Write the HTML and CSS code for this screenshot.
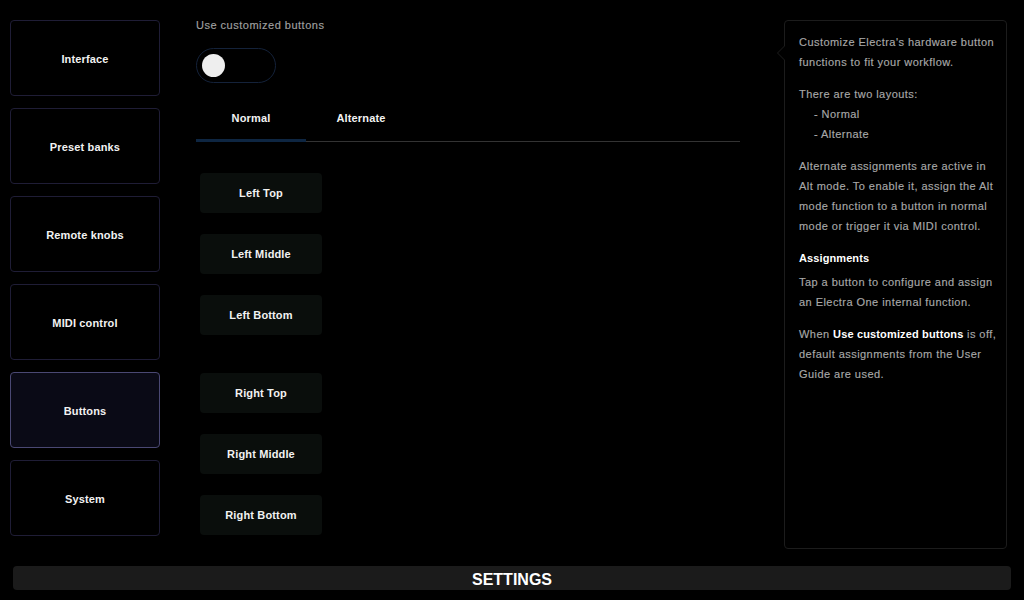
FILE: index.html
```html
<!DOCTYPE html>
<html>
<head>
<meta charset="utf-8">
<link rel="stylesheet" href="styles.css">
</head>
<body>
<div class="app">
  <div class="main">
    <nav class="sidebar">
      <div class="nav-item">Interface</div>
      <div class="nav-item">Preset banks</div>
      <div class="nav-item">Remote knobs</div>
      <div class="nav-item">MIDI control</div>
      <div class="nav-item active">Buttons</div>
      <div class="nav-item">System</div>
    </nav>
    <section class="content">
      <div class="label">Use customized buttons</div>
      <div class="toggle"><div class="knob"></div></div>
      <div class="tabs">
        <div class="tab active">Normal</div>
        <div class="tab">Alternate</div>
      </div>
      <div class="buttons">
        <div class="group">
          <div class="hw-btn">Left Top</div>
          <div class="hw-btn">Left Middle</div>
          <div class="hw-btn">Left Bottom</div>
        </div>
        <div class="group">
          <div class="hw-btn">Right Top</div>
          <div class="hw-btn">Right Middle</div>
          <div class="hw-btn">Right Bottom</div>
        </div>
      </div>
    </section>
    <aside class="help">
      <p>Customize Electra's hardware button functions to fit your workflow.</p>
      <p>There are two layouts:<br><span class="indent">- Normal</span><br><span class="indent">- Alternate</span></p>
      <p>Alternate assignments are active in Alt mode. To enable it, assign the Alt mode function to a button in normal mode or trigger it via MIDI control.</p>
      <h4>Assignments</h4>
      <p>Tap a button to configure and assign an Electra One internal function.</p>
      <p>When <strong>Use customized buttons</strong> is off, default assignments from the User Guide are used.</p>
    </aside>
  </div>
  <footer class="footer">SETTINGS</footer>
</div>
</body>
</html>
```
FILE: styles.css
```css
* { box-sizing: border-box; }
html, body {
  margin: 0;
  padding: 0;
  background: #000;
  width: 1024px;
  height: 600px;
  overflow: hidden;
  font-family: "Liberation Sans", Arial, sans-serif;
  color: #fff;
}
.app {
  display: flex;
  flex-direction: column;
  height: 600px;
}
.main {
  display: flex;
  padding: 20px 17px 0 10px;
  height: 566px;
}
.sidebar {
  width: 150px;
  display: flex;
  flex-direction: column;
  gap: 12px;
  flex-shrink: 0;
}
.nav-item {
  height: 76px;
  border: 1px solid #1f1d36;
  border-radius: 4px;
  display: flex;
  align-items: center;
  justify-content: center;
  padding-top: 2px;
  font-size: 11px;
  font-weight: bold;
  letter-spacing: 0.15px;
  color: #f2f2f2;
}
.nav-item.active {
  background: #0a0a16;
  border-color: #4a4873;
}
.content {
  width: 544px;
  margin-left: 36px;
  flex-shrink: 0;
}
.label {
  font-size: 11px;
  line-height: 14px;
  color: #a0a0a0;
  margin-top: -2px;
  letter-spacing: 0.5px;
  -webkit-text-stroke: 0.15px #a0a0a0;
}
.toggle {
  margin-top: 16px;
  width: 80px;
  height: 35px;
  border: 1px solid #14223a;
  border-radius: 18px;
  display: flex;
  align-items: center;
  padding-left: 5px;
}
.knob {
  width: 23px;
  height: 23px;
  border-radius: 50%;
  background: #eeeeee;
}
.tabs {
  margin-top: 14px;
  display: flex;
  border-bottom: 1px solid #333;
}
.tab {
  width: 110px;
  height: 44px;
  display: flex;
  align-items: center;
  justify-content: center;
  font-size: 11px;
  font-weight: bold;
  letter-spacing: 0.15px;
  color: #f2f2f2;
  position: relative;
  padding-bottom: 3px;
}
.tab.active::after {
  content: "";
  position: absolute;
  left: 0;
  right: 0;
  bottom: -1px;
  height: 3px;
  background: #0e2642;
}
.buttons {
  margin-top: 31px;
  padding-left: 4px;
  display: flex;
  flex-direction: column;
  gap: 38px;
}
.group {
  display: flex;
  flex-direction: column;
  gap: 21px;
}
.hw-btn {
  width: 122px;
  height: 40px;
  background: #0a0e0c;
  border-radius: 4px;
  display: flex;
  align-items: center;
  justify-content: center;
  font-size: 11px;
  font-weight: bold;
  letter-spacing: 0.15px;
  color: #f2f2f2;
}
.help {
  margin-left: 44px;
  width: 223px;
  height: 529px;
  border: 1px solid #1c1c1c;
  border-radius: 4px;
  padding: 11px 6px 0 14px;
  position: relative;
  font-size: 11px;
  line-height: 20px;
  color: #a8a8a8;
  letter-spacing: 0.45px;
  -webkit-text-stroke: 0.15px #a8a8a8;
}
.help::before {
  content: "";
  position: absolute;
  left: -8px;
  top: 24px;
  width: 0;
  height: 0;
  border-top: 8px solid transparent;
  border-bottom: 8px solid transparent;
  border-right: 8px solid #1c1c1c;
}
.help::after {
  content: "";
  position: absolute;
  left: -7px;
  top: 25px;
  width: 0;
  height: 0;
  border-top: 7px solid transparent;
  border-bottom: 7px solid transparent;
  border-right: 7px solid #000;
}
.help p {
  margin: 0 0 12px 0;
}
.help h4 {
  margin: 0 0 4px 0;
  font-size: 11px;
  font-weight: bold;
  color: #fff;
  line-height: 20px;
  letter-spacing: 0.1px;
  -webkit-text-stroke: 0;
}
.help strong {
  color: #fff;
  letter-spacing: 0.15px;
  -webkit-text-stroke: 0;
}
.indent { padding-left: 15px; }
.footer {
  margin: 0 13px 0 13px;
  height: 24px;
  background: #1b1b1b;
  border-radius: 4px;
  display: flex;
  align-items: center;
  justify-content: center;
  padding-top: 3px;
  font-size: 16px;
  font-weight: bold;
  color: #fff;
}
```
